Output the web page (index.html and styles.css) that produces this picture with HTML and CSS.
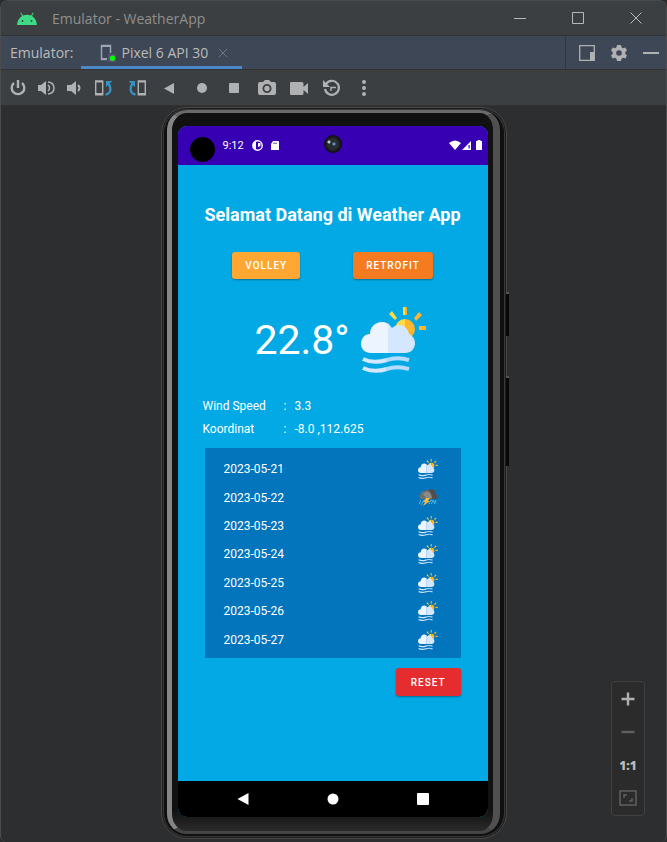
FILE: index.html
```html
<!DOCTYPE html>
<html lang="id">
<head>
<meta charset="utf-8">
<meta name="viewport" content="width=device-width, initial-scale=1">
<title>Emulator - WeatherApp</title>
<link rel="stylesheet" href="styles.css">
</head>
<body>
<svg class="defs" aria-hidden="true">
  <symbol id="sunny-cloud" viewBox="0 0 66 66">
    <path fill="#ffda44" d="M42 0h2v8h-2zM44 12a10 10 0 0 0-10 10l10 9zM28 7l3-3 5 7-2 2z"/>
    <path fill="#ffb62d" d="M44 0h2v8h-2zM44 12a10 10 0 0 1 0 20zM53 11l5-6 3 3-6 6zM58 19h7v4h-7z"/>
    <path fill="#ecf4ff" d="M27 46H10C4 46 0 42 0 37c0-6 4-10 9-10 0-7 5-12 12-12 2.500 0 4.500.5 6 2z"/>
    <path fill="#d4e7ff" d="M27 16l4 5c2-2 5-3 7-3 6 0 9 4 10 9 4 2 6 5 6 9 0 6-4 10-10 10H27z"/>
    <path fill="none" stroke="#d4e7ff" stroke-width="4" d="M2 52q10 5 24 1M2 61q10 5 24 1"/>
    <path fill="none" stroke="#b5dbff" stroke-width="4" d="M25 53.200q12-4 23 0M25 62.200q12-4 23 0"/>
  </symbol>
  <symbol id="storm-cloud" viewBox="0 0 20 20">
    <path fill="#6e6e6e" d="M3 11a3 3 0 0 1-.5-5A4 4 0 0 1 7 3a6 5 0 0 1 9 2c3 1 4 3 3.500 6z"/>
    <path fill="#4f4f4f" d="M10 2c4-2 8 0 8 4 2 1 2 3 1.500 5H14c0-4-1-7-4-9z"/>
    <path fill="#8b8b8b" d="M5 6c2-3 6-3 8 1l1 3H8z"/>
    <path fill="none" stroke="#48b7e8" d="M3 12l-2 4M6 12l-3 5M13 12l-2 4M16 12l-3 4M18 12l-2 4M13 12l5 3"/>
    <path fill="#ffb53b" d="M8 10h4l-2 3h2l-7 5 2-4H5z"/>
  </symbol>
</svg>

<div class="window">
  <header class="titlebar">
    <svg class="droid" viewBox="0 0 20 13" aria-hidden="true">
      <path fill="#3ddc84" d="M0 13C.3 9 2 6 5 4L3.300 1l.8-.5L6 3.500a10 10 0 0 1 8 0L15.900.5l.8.5L15 4c3 2 4.700 5 5 9z"/>
      <circle cx="5.500" cy="9" r=".9" fill="#3c3f41"/><circle cx="14.500" cy="9" r=".9" fill="#3c3f41"/>
    </svg>
    <h1>Emulator - WeatherApp</h1>
    <div class="window-controls">
      <button aria-label="Minimize"><svg viewBox="0 0 14 14"><path d="M1 7.500h12"/></svg></button>
      <button aria-label="Maximize"><svg viewBox="0 0 14 14"><path d="M1.500 1.500h11v11h-11z"/></svg></button>
      <button aria-label="Close"><svg viewBox="0 0 14 14"><path d="M1.500 1.500l11 11M12.500 1.500l-11 11"/></svg></button>
    </div>
  </header>

  <div class="tabbar">
    <span class="tabbar-label">Emulator:</span>
    <button class="tab">
      <svg class="tab-device" viewBox="0 0 16 18" aria-hidden="true">
        <path fill="none" stroke="#9aa7b0" stroke-width="1.500" d="M7 15.500H1.500v-14h9V9"/>
        <path fill="#9aa7b0" d="M1 1h10v2H1zM1 14h6v2H1z"/>
        <path fill="#5b4b78" d="M8 10h8v8H8z"/><circle cx="12.500" cy="14.200" r="2.700" fill="#0f0"/>
      </svg>
      <span>Pixel 6 API 30</span>
      <svg class="tab-close" viewBox="0 0 10 10" aria-hidden="true"><path d="M1 1l8 8M9 1L1 9"/></svg>
    </button>
    <div class="tab-actions">
      <button aria-label="Dock"><svg viewBox="0 0 16 16"><path fill="none" stroke="#afb1b3" stroke-width="1.300" d="M.7.7h14.600v14.600H.7z"/><path fill="#afb1b3" d="M11 7h4v8h-4z"/></svg></button>
      <button aria-label="Settings"><svg viewBox="0 0 16 16"><path fill="#afb1b3" fill-rule="evenodd" d="M6 0h4l.5 2.300 1.500.9 2.300-.8 1.700 3L14.300 7v2l1.700 1.600-1.700 3-2.300-.8-1.500.9L10 16H6l-.5-2.300-1.500-.9-2.300.8-1.700-3L1.700 9V7L0 5.400l1.700-3 2.300.8 1.500-.9zM8 5.200a2.800 2.800 0 1 0 0 5.600 2.800 2.800 0 0 0 0-5.600z"/></svg></button>
      <button aria-label="Hide"><svg viewBox="0 0 16 16"><path fill="#afb1b3" d="M0 7h16v2H0z"/></svg></button>
    </div>
  </div>

  <nav class="toolbar" aria-label="Emulator controls">
    <div class="hardware">
      <button aria-label="Power"><svg viewBox="0 0 18 18"><path fill="none" stroke="#afb1b3" stroke-width="2.400" d="M9 1v8M5 4a6.300 6.300 0 1 0 8 0"/></svg></button>
      <button aria-label="Volume up"><svg viewBox="0 0 18 18"><path fill="#afb1b3" d="M1 6h3l5-4v14l-5-4H1z"/><path fill="none" stroke="#afb1b3" stroke-width="1.500" d="M11 6q3 3 0 6M11 3c8 1 8 11 0 12"/></svg></button>
      <button aria-label="Volume down"><svg viewBox="0 0 18 18"><path fill="#afb1b3" d="M2 6h4l5-4v14l-5-4H2z"/><path fill="none" stroke="#afb1b3" stroke-width="2" d="M13 6q3 3 0 6"/></svg></button>
    </div>
    <div class="rotate">
      <button aria-label="Rotate left"><svg viewBox="0 0 20 18"><path fill="none" stroke="#afb1b3" stroke-width="1.400" d="M1.700 2.200h7v13.600h-7z"/><path fill="#afb1b3" d="M1 1.500h8v2H1zM1 14h8v2H1z"/><path fill="none" stroke="#3592c4" stroke-width="2.400" d="M11.500 15.500c6-1 6-7 3-11"/><path fill="#3592c4" d="M12 2h6.500L12 8z"/></svg></button>
      <button aria-label="Rotate right"><svg viewBox="0 0 20 18"><path fill="none" stroke="#afb1b3" stroke-width="1.400" d="M11.300 2.200h7v13.600h-7z"/><path fill="#afb1b3" d="M11 1.500h8v2h-8zM11 14h8v2h-8z"/><path fill="none" stroke="#3592c4" stroke-width="2.400" d="M8.500 15.500c-6-1-6-7-3-11"/><path fill="#3592c4" d="M8 2H1.500L8 8z"/></svg></button>
    </div>
    <div class="keys">
      <button aria-label="Back"><svg viewBox="0 0 18 18"><path fill="#afb1b3" d="M14 4v11L4 9.500z"/></svg></button>
      <button aria-label="Home"><svg viewBox="0 0 18 18"><circle cx="9" cy="9" r="5" fill="#afb1b3"/></svg></button>
      <button aria-label="Overview"><svg viewBox="0 0 18 18"><rect x="4" y="4" width="10" height="10" rx="1" fill="#afb1b3"/></svg></button>
      <button aria-label="Screenshot"><svg viewBox="0 0 18 18"><path fill="#afb1b3" fill-rule="evenodd" d="M2 3h3l2-2h4l2 2h3q2 0 2 2v9q0 2-2 2H2q-2 0-2-2V5q0-2 2-2zM9 5a4.500 4.500 0 1 0 0 9 4.500 4.500 0 0 0 0-9z"/><circle cx="9" cy="9.500" r="2.700" fill="#afb1b3"/></svg></button>
      <button aria-label="Record"><svg viewBox="0 0 18 18"><path fill="#afb1b3" d="M1 3h11q1.500 0 1.500 1.500V8L18 4v11l-4.500-4v3.500q0 1.500-1.500 1.500H1q-1 0-1-1V4q0-1 1-1z"/></svg></button>
      <button aria-label="Snapshots"><svg viewBox="0 0 18 18"><path fill="none" stroke="#afb1b3" stroke-width="2.200" d="M3 5a7 7 0 1 1-1 5"/><path fill="#afb1b3" d="M0 1v7h7z"/><path fill="none" stroke="#afb1b3" stroke-width="1.500" d="M8 12V8.500h5"/></svg></button>
      <button aria-label="More"><svg viewBox="0 0 18 18" fill="#afb1b3"><circle cx="9" cy="3" r="2"/><circle cx="9" cy="9" r="2"/><circle cx="9" cy="15" r="2"/></svg></button>
    </div>
  </nav>

  <main class="stage">
    <div class="phone">
      <span class="side-key power"></span>
      <span class="side-key volume"></span>
      <div class="bezel">
        <div class="screen">
          <span class="camera" aria-hidden="true"></span>
          <div class="status">
            <span class="cutout"></span>
            <span class="clock">9:12</span>
            <svg viewBox="0 0 11 11" aria-hidden="true"><circle cx="5.500" cy="5.500" r="4.700" fill="none" stroke="#fff" stroke-width="1.400"/><path fill="#fff" d="M1 3l3-2v9L1 8zM6 3h2.500v3L6 7z"/></svg>
            <svg viewBox="0 0 11 11" aria-hidden="true"><path fill="#fff" fill-rule="evenodd" d="M4 1h5q1 0 1 1v8H2V4zM4.500 2.500V4h1V2.500zM6.500 2.500V4h1V2.500z"/></svg>
            <div class="signal">
              <svg viewBox="0 0 34 11" aria-hidden="true"><path fill="#fff" d="M0 3q6-5 12 0l-6 7zM22 1v9h-9z"/><path fill="#3700b3" d="M19.500 5h1.200v3.500h-1.200z"/><path fill="#fff" d="M27 1h1.500V0h3v1H33v9h-6z"/></svg>
            </div>
          </div>

          <section class="app">
            <h2>Selamat Datang di Weather App</h2>
            <div class="modes">
              <button class="btn volley">VOLLEY</button>
              <button class="btn retrofit">RETROFIT</button>
            </div>
            <div class="current">
              <span class="temp">22.8°</span>
              <svg role="img" aria-label="Cerah berawan"><use href="#sunny-cloud"/></svg>
            </div>
            <dl class="details">
              <dt>Wind Speed</dt><dd>:</dd><dd>3.3</dd>
              <dt>Koordinat</dt><dd>:</dd><dd>-8.0 ,112.625</dd>
            </dl>
            <ul class="forecast">
              <li>2023-05-21<svg aria-hidden="true"><use href="#sunny-cloud"/></svg></li>
              <li>2023-05-22<svg aria-hidden="true"><use href="#storm-cloud"/></svg></li>
              <li>2023-05-23<svg aria-hidden="true"><use href="#sunny-cloud"/></svg></li>
              <li>2023-05-24<svg aria-hidden="true"><use href="#sunny-cloud"/></svg></li>
              <li>2023-05-25<svg aria-hidden="true"><use href="#sunny-cloud"/></svg></li>
              <li>2023-05-26<svg aria-hidden="true"><use href="#sunny-cloud"/></svg></li>
              <li>2023-05-27<svg aria-hidden="true"><use href="#sunny-cloud"/></svg></li>
            </ul>
            <button class="btn reset">RESET</button>
          </section>

          <nav class="navbar" aria-label="Android navigation">
            <button aria-label="Back"><svg viewBox="0 0 12 12"><path d="M11.500 0v12L.5 6z"/></svg></button>
            <button aria-label="Home"><svg viewBox="0 0 12 12"><circle cx="6" cy="6" r="5.500"/></svg></button>
            <button aria-label="Recents"><svg viewBox="0 0 12 12"><rect width="12" height="12" rx="1"/></svg></button>
          </nav>
        </div>
      </div>
    </div>

    <div class="zoom">
      <button aria-label="Zoom in"><svg viewBox="0 0 18 18"><path stroke="#afb1b3" stroke-width="2.400" d="M9 2.500v13M2.500 9h13"/></svg></button>
      <button aria-label="Zoom out"><svg viewBox="0 0 18 18"><path stroke="#5e6062" stroke-width="2.400" d="M2.500 9h13"/></svg></button>
      <button class="actual">1:1</button>
      <button aria-label="Fit to screen"><svg viewBox="0 0 18 18" fill="none" stroke="#5e6062" stroke-width="1.500"><path d="M1 2h16v14H1z"/><path d="M5 9V6h3M13 9v3h-3"/></svg></button>
    </div>
  </main>
</div>
</body>
</html>
```
FILE: styles.css
```css
* {
  box-sizing: border-box;
}

body {
  margin: 0;
  background: #2b2b2b;
  color: #bbbbbb;
  font-family: "Open Sans", "Noto Sans", sans-serif;
  font-size: 14px;
}

button {
  display: flex;
  align-items: center;
  justify-content: center;
  margin: 0;
  padding: 0;
  border: 0;
  background: none;
  color: inherit;
  font: inherit;
}

.defs {
  position: absolute;
  width: 0;
  height: 0;
}

.window {
  display: flex;
  flex-direction: column;
  min-height: 100vh;
  border: 1px solid #4a4b4c;
  border-bottom: 0;
  border-radius: 8px 8px 6px 6px;
  background: #2d2e30;
  overflow: hidden;
}

/* Window title */
.titlebar {
  display: flex;
  align-items: center;
  height: 35px;
  padding-left: 16px;
  border-bottom: 1px solid #2f3133;
  background: #3c3f41;
}

.droid {
  width: 20px;
  height: 13px;
}

.titlebar h1 {
  flex: 1;
  margin: 0 0 0 15px;
  color: #8f8f8f;
  font-size: 14px;
  font-weight: 400;
}

.window-controls {
  display: flex;
  gap: 44px;
  padding-right: 23px;
}

.window-controls svg {
  display: block;
  width: 14px;
  height: 14px;
  fill: none;
  stroke: #b8b8b8;
}

/* Device tabs */
.tabbar {
  display: flex;
  align-items: stretch;
  height: 34px;
  padding-left: 9px;
  border-bottom: 1px solid #323232;
  background: #3d4755;
}

.tabbar-label {
  align-self: center;
  margin-right: 8px;
}

.tab {
  gap: 5px;
  padding: 3px 14px 0 19px;
  border-bottom: 3px solid #4a88c7;
}

.tab-device {
  width: 16px;
  height: 18px;
}

.tab-close {
  width: 10px;
  height: 10px;
  margin-left: 5px;
  fill: none;
  stroke: #6e7780;
}

.tab-actions {
  display: flex;
  gap: 16px;
  margin-left: auto;
  padding: 0 7px 0 13px;
  border-left: 1px solid #323539;
}

.tab-actions svg {
  width: 16px;
  height: 16px;
}

/* Emulator controls */
.toolbar {
  display: flex;
  gap: 6px;
  height: 36px;
  padding-left: 5px;
  border-bottom: 1px solid #323232;
  background: #3c3f41;
}

.toolbar > div {
  display: flex;
  gap: 4px;
}

.toolbar button {
  width: 24px;
}

.toolbar svg {
  width: 18px;
  height: 18px;
}

.toolbar .rotate {
  gap: 9px;
}

.rotate svg {
  width: 20px;
}

.toolbar .keys {
  justify-content: space-between;
  width: 219px;
  margin-left: 2px;
}

/* Device */
.stage {
  position: relative;
  display: flex;
  flex: 1;
  justify-content: center;
  padding: 1px 0 3px;
}

.phone {
  position: relative;
  display: flex;
  width: 346px;
  padding: 2px 6px 4px 5px;
  border: 1px solid #484848;
  border-radius: 26px;
  background: #101010;
  box-shadow: inset 0 0 0 1px #1c1c1c, inset 0 0 0 2px #383838;
}

.bezel {
  display: flex;
  flex: 1;
  padding: 13px 5px 14px 6px;
  border: solid;
  border-color: #6a6a6a #505050 #444444 #858585;
  border-width: 3px 7px 3px 5px;
  border-radius: 20px;
  background: linear-gradient(#111111 97%, #2a2a2a);
}

.side-key {
  position: absolute;
  right: -3px;
  width: 3px;
  border-top: 2px solid #555555;
  background: #080808;
}

.power {
  top: 184px;
  height: 44px;
}

.volume {
  top: 268px;
  height: 90px;
}

.screen {
  position: relative;
  display: flex;
  flex: 1;
  flex-direction: column;
  border-radius: 9px;
  background: #03a9e4;
  color: #ffffff;
  font-family: Roboto, sans-serif;
  font-size: 12px;
  overflow: hidden;
}

.camera {
  position: absolute;
  top: 9px;
  left: 50%;
  width: 18px;
  height: 18px;
  margin-left: -9px;
  border-radius: 50%;
  background: radial-gradient(circle at 5px 7px, #b8c8d8 1px, transparent 2px), radial-gradient(circle at 10px 9px, #5d94c0 1px, transparent 2px), radial-gradient(#292c31 40%, #0b0b0b 70%);
}

.status {
  display: flex;
  align-items: center;
  height: 39px;
  padding: 0 5px 0 12px;
  background: #3700b3;
}

.cutout {
  align-self: flex-end;
  width: 25px;
  height: 25px;
  margin: 0 8px 3px 0;
  border-radius: 50%;
  background: #000000;
}

.clock {
  margin-right: 2px;
  font-size: 11px;
}

.status > svg {
  width: 11px;
  height: 11px;
  margin-left: 6px;
}

.signal {
  display: flex;
  margin-left: auto;
}

.signal svg {
  width: 34px;
  height: 11px;
}

/* Weather */
.app {
  display: flex;
  flex: 1;
  flex-direction: column;
  padding: 38px 27px 0;
}

.app h2 {
  align-self: center;
  margin: 0;
  font-size: 18px;
  font-weight: 700;
  line-height: 24px;
  white-space: nowrap;
}

.modes {
  display: flex;
  justify-content: center;
  gap: 53px;
  margin-top: 25px;
}

.btn {
  height: 27px;
  padding: 0 13px;
  border-radius: 3px;
  box-shadow: 0 1px 2px rgba(0, 0, 0, 0.35);
  font-size: 10px;
  font-weight: 500;
  letter-spacing: 1px;
}

.volley {
  background: #ffa733;
}

.retrofit {
  background: #f47b20;
}

.reset {
  align-self: flex-end;
  height: 28px;
  margin-top: 10px;
  padding: 0 15px;
  background: #e52d2f;
}

.current {
  display: flex;
  align-items: center;
  justify-content: center;
  gap: 11px;
  margin: 28px 0 0 16px;
}

.temp {
  font-size: 41px;
  line-height: 66px;
}

.current svg {
  width: 66px;
  height: 66px;
}

.details {
  display: grid;
  grid-template-columns: 81px 11px auto;
  margin: 22px 0 7px -2px;
  line-height: 23px;
}

.details dd {
  margin: 0;
}

.forecast {
  display: grid;
  grid-auto-rows: 1fr;
  min-height: 210px;
  margin: 0;
  padding: 7px 23px 4px 19px;
  background: #0275bc;
  list-style: none;
}

.forecast li {
  display: flex;
  align-items: center;
  justify-content: space-between;
}

.forecast svg {
  width: 20px;
  height: 20px;
}

.navbar {
  display: flex;
  align-items: center;
  justify-content: space-around;
  height: 36px;
  padding: 0 20px;
  background: #000000;
}

.navbar svg {
  width: 12px;
  height: 12px;
  fill: #ffffff;
}

/* Zoom controls */
.zoom {
  position: absolute;
  right: 21px;
  bottom: 26px;
  display: flex;
  flex-direction: column;
  gap: 15px;
  width: 34px;
  padding: 8px 7px;
  border: 1px solid #3f4143;
  border-radius: 4px;
  background: #2b2b2b;
}

.zoom button {
  height: 18px;
}

.zoom svg {
  width: 18px;
  height: 18px;
}

.actual {
  font-size: 12px;
  font-weight: 800;
}
```
